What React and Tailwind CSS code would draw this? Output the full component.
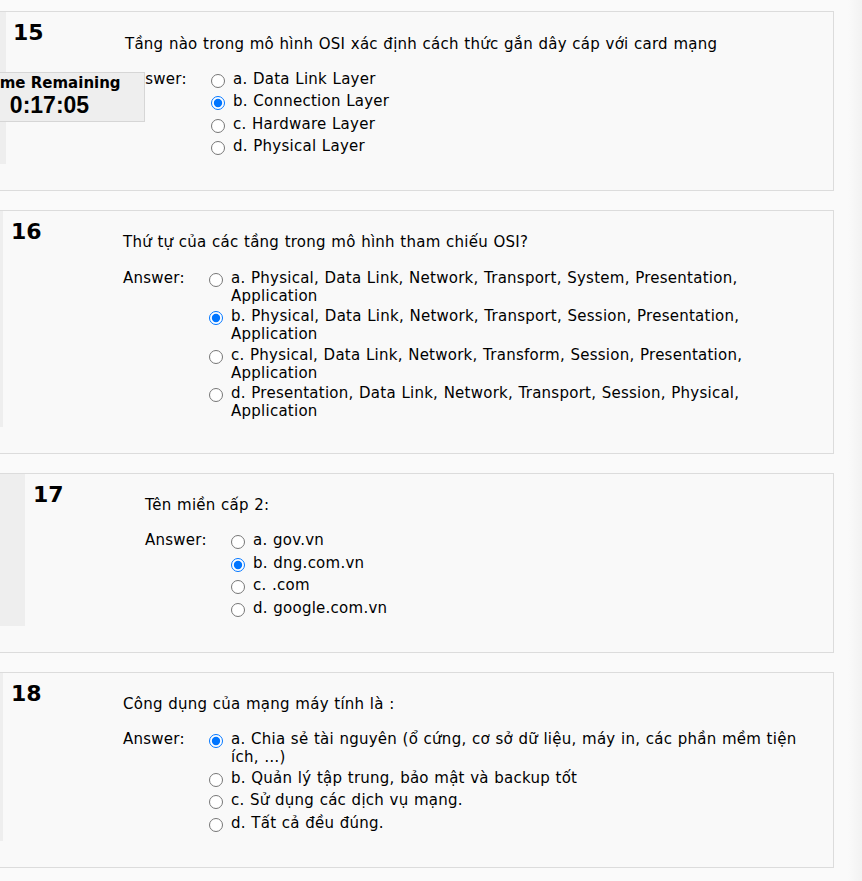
import React from 'react';

const questions = [
  {
    no: 15,
    strip: 6,
    gap: 7,
    text: 'Tầng nào trong mô hình OSI xác định cách thức gắn dây cáp với card mạng',
    checked: 1,
    options: [['a. Data Link Layer'], ['b. Connection Layer'], ['c. Hardware Layer'], ['d. Physical Layer']],
  },
  {
    no: 16,
    strip: 3,
    gap: 8,
    text: 'Thứ tự của các tầng trong mô hình tham chiếu OSI?',
    checked: 1,
    options: [
      ['a. Physical, Data Link, Network, Transport, System, Presentation,', 'Application'],
      ['b. Physical, Data Link, Network, Transport, Session, Presentation,', 'Application'],
      ['c. Physical, Data Link, Network, Transform, Session, Presentation,', 'Application'],
      ['d. Presentation, Data Link, Network, Transport, Session, Physical,', 'Application'],
    ],
  },
  {
    no: 17,
    strip: 25,
    gap: 8,
    text: 'Tên miền cấp 2:',
    checked: 1,
    options: [['a. gov.vn'], ['b. dng.com.vn'], ['c. .com'], ['d. google.com.vn']],
  },
  {
    no: 18,
    strip: 3,
    gap: 8,
    text: 'Công dụng của mạng máy tính là :',
    checked: 0,
    options: [
      ['a. Chia sẻ tài nguyên (ổ cứng, cơ sở dữ liệu, máy in, các phần mềm tiện', 'ích, …)'],
      ['b. Quản lý tập trung, bảo mật và backup tốt'],
      ['c. Sử dụng các dịch vụ mạng.'],
      ['d. Tất cả đều đúng.'],
    ],
  },
];

const Question = ({ q }) => (
  <div className="mb-[18.5px] border-y border-r border-[#dcdcdc] bg-[#f9f9f9] pb-[26px]">
    <div className="flex items-stretch">
      <div className="shrink-0 bg-[#eeeeee]" style={{ width: q.strip }} />
      <div
        className="shrink-0 pt-[8px] text-[22px] leading-[26px] font-bold font-['DejaVu_Sans',sans-serif] text-black tracking-normal [word-spacing:0]"
        style={{ marginLeft: q.gap, width: 112 }}
      >
        {q.no}
      </div>
      <div className="flex-1 pt-[22.5px] pb-[6.2px]">
        <div className="leading-[18px] whitespace-nowrap">{q.text}</div>
        <div className="mt-[15.7px] flex">
          <div className="w-[81px] shrink-0 pt-[1.5px] leading-[18px]">Answer:</div>
          <div>
            {q.options.map((lines, i) => (
              <div key={i} className="flex items-start">
                <input
                  type="radio"
                  name={`q${q.no}`}
                  defaultChecked={i === q.checked}
                  className="mt-[5.5px] mb-[3px] ml-[4.5px] mr-[8.5px] h-[14px] w-[14px] shrink-0"
                />
                <label className="pt-[1.5px] pb-[1px] leading-[18px] whitespace-nowrap">
                  {lines.map((l, j) => (
                    <div key={j}>{l}</div>
                  ))}
                </label>
              </div>
            ))}
          </div>
        </div>
      </div>
    </div>
  </div>
);

export default function App() {
  return (
    <div className="relative flex min-h-screen overflow-hidden bg-[#fafafa] font-['Verdana','DejaVu_Sans',sans-serif] text-[15px] tracking-[0.25px] [word-spacing:0.5px] text-black">
      <div className="w-[834px] shrink-0 pt-[11px]">
        {questions.map((q) => (
          <Question key={q.no} q={q} />
        ))}
      </div>
      <div className="flex-1 bg-[linear-gradient(to_right,#fafafa_0,#fafafa_14px,#f2f2f2_100%)]" />

      {/* timer overlay */}
      <div className="absolute top-[72px] left-[-40px] w-[185px] border border-[#d6d6d6] bg-[#eeeeee] pb-[3px] text-center tracking-normal [word-spacing:0]">
        <div className="pt-[1px] text-[15px] leading-[18px] font-bold font-['DejaVu_Sans',sans-serif] whitespace-nowrap">
          Time Remaining
        </div>
        <div className="pr-[6px] text-[23px] leading-[26px] font-bold font-['Liberation_Sans',Arial,sans-serif]">0:17:05</div>
      </div>
    </div>
  );
}
